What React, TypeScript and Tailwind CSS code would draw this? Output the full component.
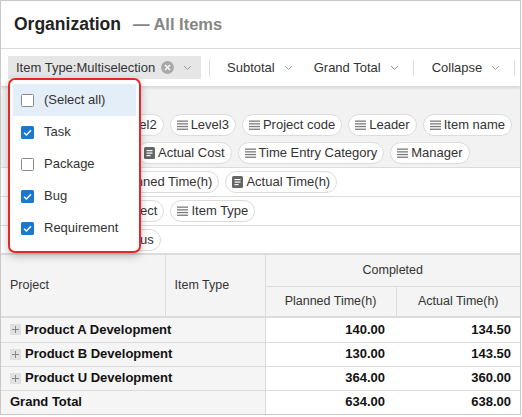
import React from "react";

const font = { fontFamily: '"Liberation Sans", Arial, sans-serif' };

function Chevron() {
  return (
    <svg width="9" height="6" viewBox="0 0 9 6" className="ml-[9px] shrink-0">
      <polyline points="1,1 4.5,4.5 8,1" fill="none" stroke="#9a9a9a" strokeWidth="1" />
    </svg>
  );
}

function LinesIcon() {
  return (
    <svg width="11" height="10" viewBox="0 0 11 10" className="shrink-0">
      <rect x="0" y="0.5" width="11" height="1.3" fill="#7a7a7a" />
      <rect x="0" y="3.2" width="11" height="1.3" fill="#7a7a7a" />
      <rect x="0" y="5.9" width="11" height="1.3" fill="#7a7a7a" />
      <rect x="0" y="8.6" width="11" height="1.3" fill="#7a7a7a" />
    </svg>
  );
}

function ValueIcon() {
  return (
    <svg width="11" height="12" viewBox="0 0 11 12" className="shrink-0">
      <rect x="0" y="0" width="11" height="12" rx="1.5" fill="#666" />
      <rect x="2.5" y="3" width="6" height="1.2" fill="#fff" />
      <rect x="2.5" y="5.5" width="6" height="1.2" fill="#fff" />
      <rect x="2.5" y="8" width="4" height="1.2" fill="#fff" />
    </svg>
  );
}

function Chip({ label, value }: { label: string; value?: boolean }) {
  return (
    <div className="flex h-[22px] items-center gap-[3px] rounded-full border border-[#dcdcdc] bg-white px-[6px] text-[13px] text-[#333] whitespace-nowrap">
      {value ? <ValueIcon /> : <LinesIcon />}
      <span>{label}</span>
    </div>
  );
}

function Check({ checked }: { checked: boolean }) {
  if (checked) {
    return (
      <svg width="13" height="13" viewBox="0 0 13 13" className="shrink-0">
        <rect x="0" y="0" width="13" height="13" rx="1.5" fill="#1a78d0" />
        <polyline points="3,6.8 5.4,9 10,4.2" fill="none" stroke="#fff" strokeWidth="1.4" />
      </svg>
    );
  }
  return <div className="h-[13px] w-[13px] shrink-0 rounded-[1.5px] border border-[#8a8a8a] bg-white" />;
}

const options = [
  { label: "(Select all)", checked: false },
  { label: "Task", checked: true },
  { label: "Package", checked: false },
  { label: "Bug", checked: true },
  { label: "Requirement", checked: true },
];

const rows = [
  { name: "Product A Development", planned: "140.00", actual: "134.50" },
  { name: "Product B Development", planned: "130.00", actual: "143.50" },
  { name: "Product U Development", planned: "364.00", actual: "360.00" },
];

export default function App() {
  return (
    <div className="relative h-[415px] w-[521px] overflow-hidden border border-[#c8c8c8] bg-white" style={font}>
      {/* title */}
      <div className="flex h-[48px] items-center border-b border-[#dcdcdc] pl-[13px]">
        <span className="text-[17.5px] font-bold text-[#222]">Organization</span>
        <span className="ml-[12px] text-[16.5px] font-bold text-[#858585]">— All Items</span>
      </div>

      {/* toolbar */}
      <div className="relative z-10 flex h-[37px] items-center whitespace-nowrap bg-white pl-[7px] shadow-[0_2px_3px_rgba(0,0,0,0.12)]">
        <div className="flex h-[23px] w-[193px] items-center bg-[#e6e6e6] pl-[8px] text-[13px] text-[#333]">
          <span>Item Type:Multiselection</span>
          <span className="ml-[6px] flex h-[13px] w-[13px] items-center justify-center rounded-full bg-[#a9a9a9]">
            <svg width="7" height="7" viewBox="0 0 7 7">
              <path d="M1 1L6 6M6 1L1 6" stroke="#fff" strokeWidth="1.3" />
            </svg>
          </span>
          <Chevron />
        </div>
        <div className="ml-[8px] h-[16px] w-px bg-[#dcdcdc]" />
        <div className="ml-[17px] flex items-center text-[13px] text-[#333]">
          Subtotal
          <Chevron />
        </div>
        <div className="ml-[21px] flex items-center text-[13px] text-[#333]">
          Grand Total
          <Chevron />
        </div>
        <div className="ml-[14px] h-[16px] w-px bg-[#dcdcdc]" />
        <div className="ml-[18px] flex items-center text-[13px] text-[#333]">
          Collapse
          <Chevron />
        </div>
        <div className="ml-[14px] h-[16px] w-px bg-[#dcdcdc]" />
      </div>

      {/* unused fields */}
      <div className="flex h-[82px] flex-col justify-end gap-[6px] border-b border-[#dcdcdc] bg-[#f2f2f2] pb-[3px] pl-[24px]">
        <div className="flex gap-[6px]">
          <Chip label="Level1" />
          <Chip label="Level2" />
          <Chip label="Level3" />
          <Chip label="Project code" />
          <Chip label="Leader" />
          <Chip label="Item name" />
        </div>
        <div className="flex gap-[6px]">
          <Chip label="Planned Cost" value />
          <Chip label="Actual Cost" value />
          <Chip label="Time Entry Category" />
          <Chip label="Manager" />
        </div>
      </div>

      {/* data / row / column fields */}
      <div className="flex h-[29px] items-center gap-[6px] border-b border-[#dcdcdc] pl-[95px]">
        <Chip label="Planned Time(h)" value />
        <Chip label="Actual Time(h)" value />
      </div>
      <div className="flex h-[29px] items-center gap-[6px] border-b border-[#dcdcdc] pl-[95px]">
        <Chip label="Project" />
        <Chip label="Item Type" />
      </div>
      <div className="flex h-[29px] items-center gap-[6px] border-b-2 border-[#dcdcdc] pl-[95px]">
        <Chip label="Status" />
      </div>

      {/* pivot table */}
      <table className="w-[519px] table-fixed border-collapse text-[#333]">
        <colgroup>
          <col className="w-[164px]" />
          <col className="w-[100px]" />
          <col className="w-[131px]" />
          <col className="w-[124px]" />
        </colgroup>
        <thead className="bg-[#f4f4f4] text-[12.5px]">
          <tr className="h-[31px]">
            <th rowSpan={2} className="border-r border-[#dcdcdc] pl-[9px] text-left font-normal">Project</th>
            <th rowSpan={2} className="border-r border-[#dcdcdc] pl-[9px] text-left font-normal">Item Type</th>
            <th colSpan={2} className="border-b border-[#dcdcdc] text-center font-normal">Completed</th>
          </tr>
          <tr className="h-[30px]">
            <th className="border-r border-[#dcdcdc] text-center font-normal">Planned Time(h)</th>
            <th className="text-center font-normal">Actual Time(h)</th>
          </tr>
        </thead>
        <tbody className="text-[13px] font-bold text-[#111]">
          <tr className="h-[2px] bg-[#dcdcdc]">
            <td colSpan={4} className="p-0" />
          </tr>
          {rows.map((r) => (
            <tr key={r.name} className="h-[24px] border-b border-[#dcdcdc]">
              <td colSpan={2} className="border-r border-[#dcdcdc] bg-[#f5f5f5] pl-[9px]">
                <div className="flex items-center">
                  <span className="mr-[4px] flex h-[11px] w-[11px] items-center justify-center bg-[#e0e0e0]">
                    <svg width="9" height="9" viewBox="0 0 9 9">
                      <path d="M4.5 1V8M1 4.5H8" stroke="#888" strokeWidth="1" />
                    </svg>
                  </span>
                  {r.name}
                </div>
              </td>
              <td className="pr-[11px] text-right">{r.planned}</td>
              <td className="pr-[9px] text-right">{r.actual}</td>
            </tr>
          ))}
          <tr className="h-[24px] border-b border-[#dcdcdc]">
            <td colSpan={2} className="border-r border-[#dcdcdc] bg-[#f5f5f5] pl-[9px]">Grand Total</td>
            <td className="pr-[11px] text-right">634.00</td>
            <td className="pr-[9px] text-right">638.00</td>
          </tr>
        </tbody>
      </table>

      {/* multiselect dropdown */}
      <div className="absolute left-[7px] top-[77px] z-20 h-[175px] w-[133px] rounded-[7px] border-2 border-[#e8262a] bg-white px-[3px] pt-[4px] shadow-[0_3px_8px_rgba(0,0,0,0.25)]">
        {options.map((o, i) => (
          <div
            key={o.label}
            className={`flex h-[32px] items-center gap-[10px] pl-[8px] text-[13px] text-[#333] ${i === 0 ? "bg-[#e4eef8]" : ""}`}
          >
            <Check checked={o.checked} />
            <span>{o.label}</span>
          </div>
        ))}
      </div>
    </div>
  );
}
